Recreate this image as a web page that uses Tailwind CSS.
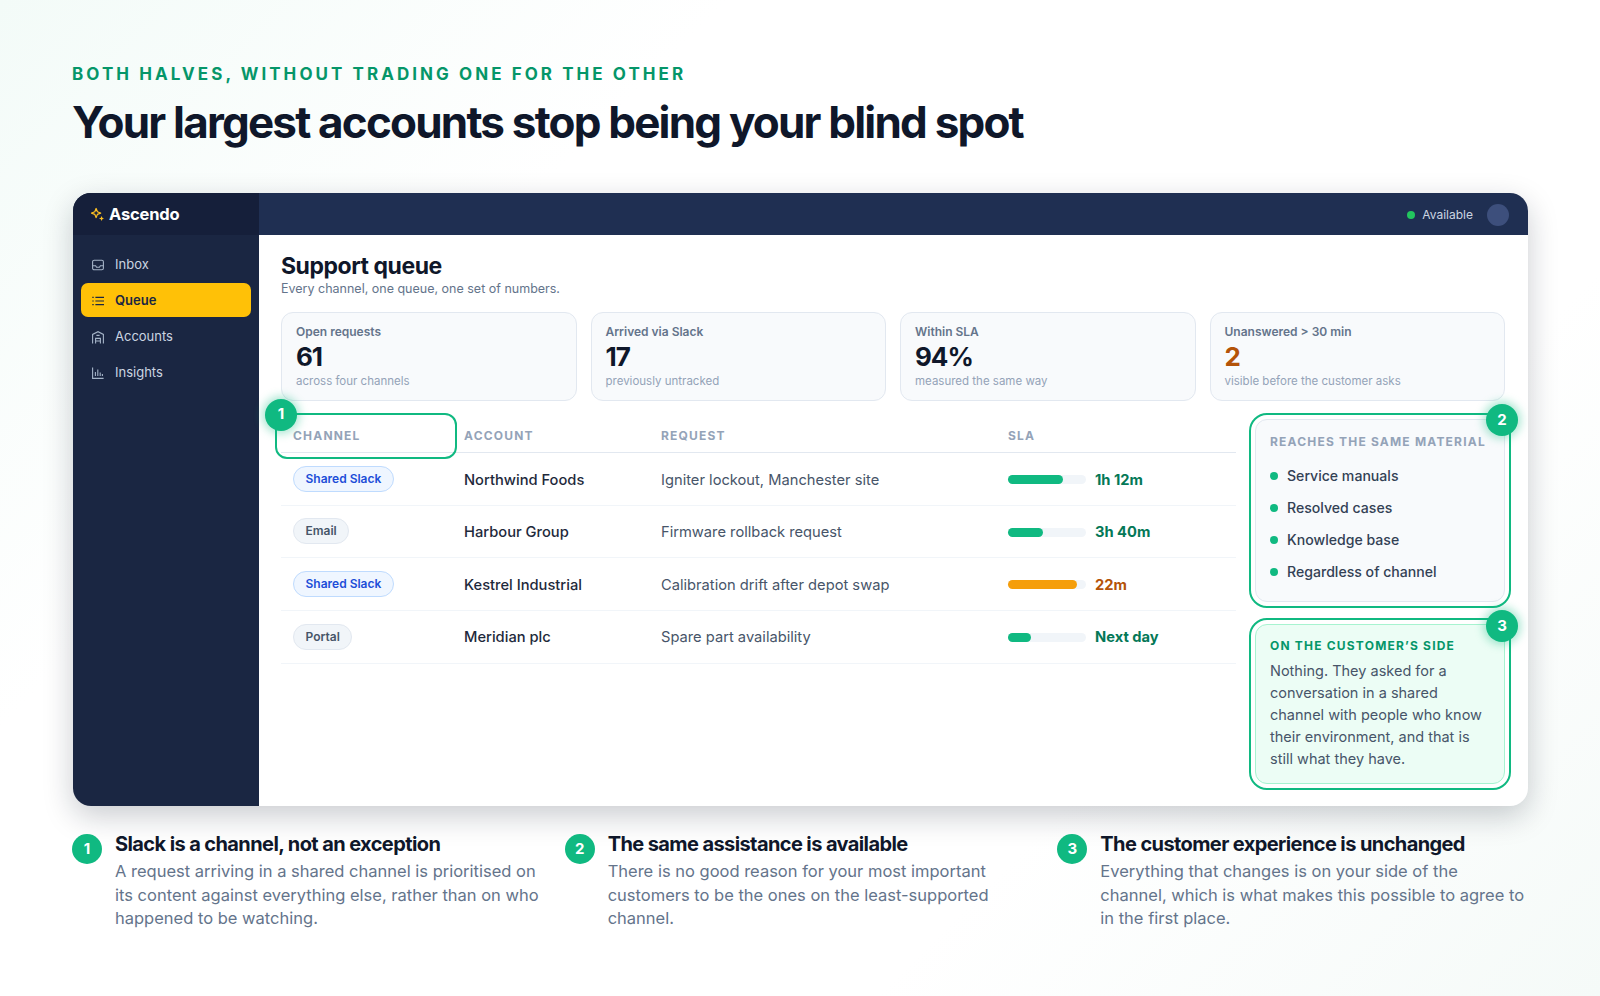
<!DOCTYPE html>
<html lang="en">
<head>
  <meta charset="UTF-8" />
  <title>Ascendo | Support queue</title>
  <script src="https://cdn.jsdelivr.net/npm/@tailwindcss/browser@4"></script>
</head>
<body class="w-[1600px] h-[996px] overflow-hidden bg-[linear-gradient(135deg,#f3fbf8_0%,#ffffff_28%,#ffffff_72%,#f5faf8_100%)] font-['Inter',sans-serif] text-[#0f172a]">
  <div class="px-[72px] pt-[63px]">

    <!-- Heading -->
    <p class="text-[17px] leading-[22px] font-bold tracking-[0.18em] text-[#059669]">BOTH HALVES, WITHOUT TRADING ONE FOR THE OTHER</p>
    <h1 class="mt-[9px] text-[44px] leading-[56px] font-bold tracking-[-0.041em] text-[#0f172a]">Your largest accounts stop being your blind spot</h1>

    <!-- App window -->
    <div class="mt-[43px] ml-[1px] h-[613px] flex rounded-[18px] bg-white shadow-[0_10px_30px_rgba(15,23,42,0.22)] overflow-hidden">
      <!-- Sidebar -->
      <aside class="w-[186px] shrink-0 bg-[#1a2642]">
        <div class="h-[42px] bg-[#151f3a] flex items-center gap-[5px] pl-[18px]">
          <svg class="w-[13px] h-[14px] text-[#fbbf24]" viewBox="0 0 14 15" fill="none"><path d="M5.5 1.6 6.9 5.1l3.5 1.4-3.5 1.4-1.4 3.5-1.4-3.5L.6 6.5l3.5-1.4Z" stroke="currentColor" stroke-width="1.4" stroke-linejoin="round"/><path d="M11.4 9.6l.8 2 2 .8-2 .8-.8 1.8-.8-1.8-2-.8 2-.8Z" fill="currentColor"/></svg>
          <span class="text-[16.5px] font-bold tracking-[-0.01em] text-white">Ascendo</span>
        </div>
        <nav class="px-[8px] pt-[12px] flex flex-col gap-[2px] text-[13px] text-[#cbd5e1]">
          <a class="h-[34px] pt-[2px] flex items-center gap-[11px] px-[11px] rounded-[7px]">
            <svg class="w-[12px] h-[12px] text-[#a5b4c8]" viewBox="0 0 12 12" fill="none" stroke="currentColor" stroke-width="1.1"><rect x=".6" y="1.2" width="10.8" height="9.6" rx="1.6"/><path d="M.6 6.8h3l1 1.5h2.8l1-1.5h3"/></svg>
            Inbox
          </a>
          <a class="h-[34px] pt-[2px] flex items-center gap-[11px] px-[11px] rounded-[7px] bg-[#ffc107] font-semibold text-[#1a2642]">
            <svg class="w-[12px] h-[12px]" viewBox="0 0 12 12" fill="none" stroke="currentColor" stroke-width="1.2"><path d="M3.4 2.4H12M3.4 6H12M3.4 9.6H12M.3 2.4h1.4M.3 6h1.4M.3 9.6h1.4"/></svg>
            Queue
          </a>
          <a class="h-[34px] pt-[2px] flex items-center gap-[11px] px-[11px] rounded-[7px]">
            <svg class="w-[12px] h-[13px] text-[#a5b4c8]" viewBox="0 0 12 13" fill="none" stroke="currentColor" stroke-width="1.1"><path d="M.6 12.6V3.4L6 .7l5.4 2.7v9.2M3.6 12.6V7.4h4.8v5.2M3.6 10h4.8M4.4 4.4h3.2"/></svg>
            Accounts
          </a>
          <a class="h-[34px] pt-[2px] flex items-center gap-[11px] px-[11px] rounded-[7px]">
            <svg class="w-[12px] h-[12px] text-[#a5b4c8]" viewBox="0 0 12 12" fill="none" stroke="currentColor" stroke-width="1.1"><path d="M.6.4v11h11M3.4 9V5M5.8 9V2.6M8.2 9V5.6M10.4 9V7"/></svg>
            Insights
          </a>
        </nav>
      </aside>

      <div class="flex-1 flex flex-col min-w-0">
        <!-- Top bar -->
        <div class="h-[42px] pt-[1px] shrink-0 bg-[#1f2f52] flex items-center justify-end gap-[14px] pr-[19px]">
          <div class="flex items-center gap-[7px] text-[12px] text-[#cbd5e1]">
            <span class="w-2 h-2 rounded-full bg-[#22c55e]"></span>
            Available
          </div>
          <span class="w-[22px] h-[22px] rounded-full bg-[#3d4f7c]"></span>
        </div>

        <!-- Main -->
        <main class="flex-1 pl-[22px] pr-[23px] pt-[16px] min-h-0">
          <h2 class="text-[23px] leading-[30px] font-bold tracking-[-0.02em]">Support queue</h2>
          <p class="text-[12.5px] leading-[16px] text-[#64748b]">Every channel, one queue, one set of numbers.</p>

          <!-- Stat cards -->
          <div class="mt-[15px] grid grid-cols-4 gap-[14px]">
            <div class="h-[89px] rounded-[12px] border border-[#e2e8f0] bg-[#f8fafc] px-[14px] pt-[11px]">
              <p class="text-[12px] leading-[16px] font-semibold text-[#64748b]">Open requests</p>
              <p class="mt-[1px] text-[26px] leading-[32px] font-bold tracking-[-0.04em] text-[#0f172a]">61</p>
              <p class="text-[11.5px] leading-[16px] text-[#94a3b8]">across four channels</p>
            </div>
            <div class="h-[89px] rounded-[12px] border border-[#e2e8f0] bg-[#f8fafc] px-[14px] pt-[11px]">
              <p class="text-[12px] leading-[16px] font-semibold text-[#64748b]">Arrived via Slack</p>
              <p class="mt-[1px] text-[26px] leading-[32px] font-bold tracking-[-0.04em] text-[#0f172a]">17</p>
              <p class="text-[11.5px] leading-[16px] text-[#94a3b8]">previously untracked</p>
            </div>
            <div class="h-[89px] rounded-[12px] border border-[#e2e8f0] bg-[#f8fafc] px-[14px] pt-[11px]">
              <p class="text-[12px] leading-[16px] font-semibold text-[#64748b]">Within SLA</p>
              <p class="mt-[1px] text-[26px] leading-[32px] font-bold tracking-[-0.04em] text-[#0f172a]">94%</p>
              <p class="text-[11.5px] leading-[16px] text-[#94a3b8]">measured the same way</p>
            </div>
            <div class="h-[89px] rounded-[12px] border border-[#e2e8f0] bg-[#f8fafc] px-[14px] pt-[11px]">
              <p class="text-[12px] leading-[16px] font-semibold text-[#64748b]">Unanswered &gt; 30 min</p>
              <p class="mt-[1px] text-[26px] leading-[32px] font-bold tracking-[-0.04em] text-[#b45309]">2</p>
              <p class="text-[11.5px] leading-[16px] text-[#94a3b8]">visible before the customer asks</p>
            </div>
          </div>

          <div class="mt-[18px] flex gap-[19px]">
            <!-- Queue table -->
            <div class="w-[955px] shrink-0">
              <div class="h-[34px] grid grid-cols-[183px_197px_347px_1fr] items-center border-b border-[#e2e8f0] text-[12px] font-bold tracking-[0.1em] text-[#94a3b8]">
                <div class="relative pl-[12px]">CHANNEL
                  <span class="absolute left-[-6px] right-[7px] top-[-14px] h-[46px] rounded-[12px] border-2 border-[#10b981]"></span>
                  <span class="absolute left-[-16px] top-[-28px] w-[32px] h-[32px] rounded-full bg-[#10b981] shadow-[0_0_8px_3px_rgba(16,185,129,0.35)] flex items-center justify-center text-[15px] font-bold tracking-normal text-white">1</span>
                </div>
                <div>ACCOUNT</div>
                <div>REQUEST</div>
                <div>SLA</div>
              </div>

              <div class="h-[52.5px] grid grid-cols-[183px_197px_347px_1fr] items-center border-b border-[#f1f5f9] text-[14.7px]">
                <div class="pl-[12px]"><span class="inline-block px-[11.5px] py-[4px] rounded-full border border-[#bfdbfe] bg-[#eff6ff] text-[12px] leading-[16px] font-semibold text-[#1d4ed8]">Shared Slack</span></div>
                <div class="pt-[2px] font-medium text-[#1e293b]">Northwind Foods</div>
                <div class="pt-[2px] text-[#475569]">Igniter lockout, Manchester site</div>
                <div class="pt-[2px] flex items-center gap-[9px]">
                  <span class="w-[78px] h-[9px] rounded-full bg-[#f1f5f9]"><span class="block h-full rounded-full bg-[#10b981]" style="width:70%"></span></span>
                  <span class="font-bold text-[#047857]">1h 12m</span>
                </div>
              </div>
              <div class="h-[52.5px] grid grid-cols-[183px_197px_347px_1fr] items-center border-b border-[#f1f5f9] text-[14.7px]">
                <div class="pl-[12px]"><span class="inline-block px-[11.5px] py-[4px] rounded-full border border-[#e2e8f0] bg-[#f1f5f9] text-[12px] leading-[16px] font-semibold text-[#475569]">Email</span></div>
                <div class="pt-[2px] font-medium text-[#1e293b]">Harbour Group</div>
                <div class="pt-[2px] text-[#475569]">Firmware rollback request</div>
                <div class="pt-[2px] flex items-center gap-[9px]">
                  <span class="w-[78px] h-[9px] rounded-full bg-[#f1f5f9]"><span class="block h-full rounded-full bg-[#10b981]" style="width:45%"></span></span>
                  <span class="font-bold text-[#047857]">3h 40m</span>
                </div>
              </div>
              <div class="h-[52.5px] grid grid-cols-[183px_197px_347px_1fr] items-center border-b border-[#f1f5f9] text-[14.7px]">
                <div class="pl-[12px]"><span class="inline-block px-[11.5px] py-[4px] rounded-full border border-[#bfdbfe] bg-[#eff6ff] text-[12px] leading-[16px] font-semibold text-[#1d4ed8]">Shared Slack</span></div>
                <div class="pt-[2px] font-medium text-[#1e293b]">Kestrel Industrial</div>
                <div class="pt-[2px] text-[#475569]">Calibration drift after depot swap</div>
                <div class="pt-[2px] flex items-center gap-[9px]">
                  <span class="w-[78px] h-[9px] rounded-full bg-[#f1f5f9]"><span class="block h-full rounded-full bg-[#f59e0b]" style="width:88%"></span></span>
                  <span class="font-bold text-[#b45309]">22m</span>
                </div>
              </div>
              <div class="h-[53px] grid grid-cols-[183px_197px_347px_1fr] items-center border-b border-[#f1f5f9] text-[14.7px]">
                <div class="pl-[12px]"><span class="inline-block px-[11.5px] py-[4px] rounded-full border border-[#e2e8f0] bg-[#f1f5f9] text-[12px] leading-[16px] font-semibold text-[#475569]">Portal</span></div>
                <div class="pt-[2px] font-medium text-[#1e293b]">Meridian plc</div>
                <div class="pt-[2px] text-[#475569]">Spare part availability</div>
                <div class="pt-[2px] flex items-center gap-[9px]">
                  <span class="w-[78px] h-[9px] rounded-full bg-[#f1f5f9]"><span class="block h-full rounded-full bg-[#10b981]" style="width:30%"></span></span>
                  <span class="font-bold text-[#047857]">Next day</span>
                </div>
              </div>
            </div>

            <!-- Side panels -->
            <div class="flex-1 flex flex-col gap-[22px]">
              <div class="relative h-[183px] rounded-[12px] border border-[#e2e8f0] bg-[#f8fafc] px-[14px] pt-[14px]">
                <span class="absolute inset-[-7px] rounded-[18px] border-2 border-[#10b981]"></span>
                <span class="absolute right-[-14px] top-[-16px] w-[32px] h-[32px] rounded-full bg-[#10b981] shadow-[0_0_8px_3px_rgba(16,185,129,0.35)] flex items-center justify-center text-[15px] font-bold text-white">2</span>
                <p class="text-[12px] leading-[16px] font-bold tracking-[0.1em] text-[#94a3b8] whitespace-nowrap">REACHES THE SAME MATERIAL</p>
                <ul class="mt-[10px] text-[14.1px] font-medium text-[#334155]">
                  <li class="h-[32px] flex items-center gap-[9px]"><span class="w-2 h-2 rounded-full bg-[#10b981]"></span>Service manuals</li>
                  <li class="h-[32px] flex items-center gap-[9px]"><span class="w-2 h-2 rounded-full bg-[#10b981]"></span>Resolved cases</li>
                  <li class="h-[32px] flex items-center gap-[9px]"><span class="w-2 h-2 rounded-full bg-[#10b981]"></span>Knowledge base</li>
                  <li class="h-[32px] flex items-center gap-[9px]"><span class="w-2 h-2 rounded-full bg-[#10b981]"></span>Regardless of channel</li>
                </ul>
              </div>
              <div class="relative h-[160px] rounded-[12px] border border-[#a7f3d0] bg-[#ecfdf5] px-[14px] pt-[13px]">
                <span class="absolute inset-[-7px] rounded-[18px] border-2 border-[#10b981]"></span>
                <span class="absolute right-[-14px] top-[-15px] w-[32px] h-[32px] rounded-full bg-[#10b981] shadow-[0_0_8px_3px_rgba(16,185,129,0.35)] flex items-center justify-center text-[15px] font-bold text-white">3</span>
                <p class="text-[12px] leading-[16px] font-bold tracking-[0.1em] text-[#059669] whitespace-nowrap">ON THE CUSTOMER’S SIDE</p>
                <p class="mt-[6px] text-[14.5px] leading-[22px] text-[#475569]">Nothing. They asked for a conversation in a shared channel with people who know their environment, and that is still what they have.</p>
              </div>
            </div>
          </div>
        </main>
      </div>
    </div>

    <!-- Footnotes -->
    <div class="mt-[25px] grid grid-cols-3 gap-[22px]">
      <div class="flex gap-[13px]">
        <span class="mt-[3px] w-[30px] h-[30px] shrink-0 rounded-full bg-[#10b981] flex items-center justify-center text-[15px] font-bold text-white">1</span>
        <div>
          <h3 class="text-[20px] leading-[26px] font-bold tracking-[-0.03em] text-[#0f172a]">Slack is a channel, not an exception</h3>
          <p class="mt-[3px] text-[16.5px] leading-[23.5px] text-[#64748b]">A request arriving in a shared channel is prioritised on its content against everything else, rather than on who happened to be watching.</p>
        </div>
      </div>
      <div class="flex gap-[13px]">
        <span class="mt-[3px] w-[30px] h-[30px] shrink-0 rounded-full bg-[#10b981] flex items-center justify-center text-[15px] font-bold text-white">2</span>
        <div>
          <h3 class="text-[20px] leading-[26px] font-bold tracking-[-0.03em] text-[#0f172a]">The same assistance is available</h3>
          <p class="mt-[3px] text-[16.5px] leading-[23.5px] text-[#64748b]">There is no good reason for your most important customers to be the ones on the least-supported channel.</p>
        </div>
      </div>
      <div class="flex gap-[13px]">
        <span class="mt-[3px] w-[30px] h-[30px] shrink-0 rounded-full bg-[#10b981] flex items-center justify-center text-[15px] font-bold text-white">3</span>
        <div>
          <h3 class="text-[20px] leading-[26px] font-bold tracking-[-0.03em] text-[#0f172a]">The customer experience is unchanged</h3>
          <p class="mt-[3px] text-[16.5px] leading-[23.5px] text-[#64748b]">Everything that changes is on your side of the channel, which is what makes this possible to agree to in the first place.</p>
        </div>
      </div>
    </div>
  </div>
</body>
</html>
